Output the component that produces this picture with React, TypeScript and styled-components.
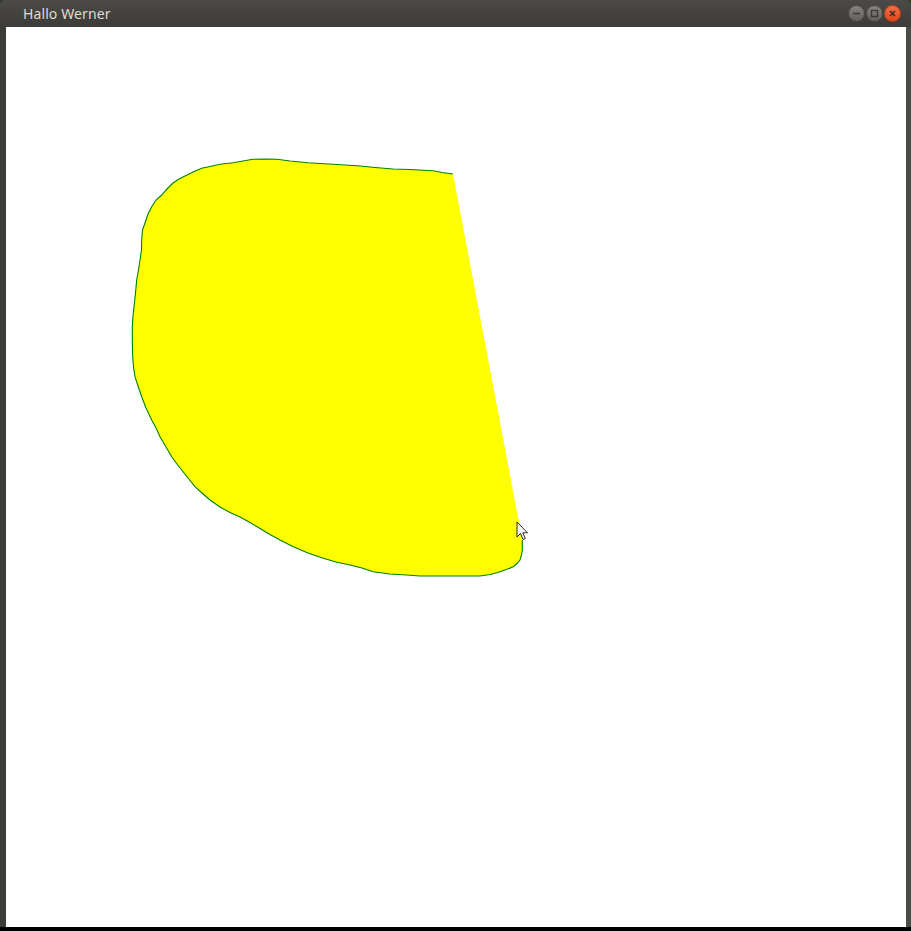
import * as React from "react";
import styled, { createGlobalStyle } from "styled-components";

const GlobalStyle = createGlobalStyle`
  html, body {
    margin: 0;
    padding: 0;
    background: #2f3b22;
  }
  body {
    font-family: "Noto Sans", "DejaVu Sans", sans-serif;
  }
`;

const Frame = styled.div`
  width: 911px;
  height: 931px;
  display: flex;
  flex-direction: column;
  overflow: hidden;
`;

const TitleBar = styled.div`
  height: 27px;
  flex: 0 0 27px;
  display: flex;
  align-items: center;
  justify-content: space-between;
  padding: 0 10px 0 23px;
  box-sizing: border-box;
  background: linear-gradient(#4b4a46, #3c3b37);
  border-radius: 5px 5px 0 0;
`;

const Title = styled.span`
  color: #dfdbd2;
  font-size: 14px;
  line-height: 27px;
  letter-spacing: 0.1px;
`;

const Controls = styled.div`
  display: flex;
  gap: 1px;
  align-items: center;
`;

const WinButton = styled.div<{ $close?: boolean }>`
  width: 17px;
  height: 17px;
  border-radius: 50%;
  box-sizing: border-box;
  display: flex;
  align-items: center;
  justify-content: center;
  border: 1px solid ${(p) => (p.$close ? "#b8401c" : "#4a4945")};
  background: ${(p) =>
    p.$close
      ? "linear-gradient(#f26d43, #e0491c)"
      : "linear-gradient(#85847f, #605f5b)"};
`;

const Body = styled.div`
  flex: 1;
  display: flex;
`;

const Border = styled.div<{ $w: number; $c: string }>`
  width: ${(p) => p.$w}px;
  flex: 0 0 ${(p) => p.$w}px;
  background: ${(p) => p.$c};
`;

const Canvas = styled.div`
  flex: 1;
  position: relative;
  background: #ffffff;
`;

const Drawing = styled.svg`
  display: block;
  width: 900px;
  height: 900px;
`;

const Cursor = styled.svg`
  position: absolute;
  left: 510px;
  top: 494px;
  width: 14px;
  height: 22px;
`;

const BottomStrip = styled.div`
  height: 4px;
  flex: 0 0 4px;
  background: #000000;
`;

const outline = [
  [453, 174], [442, 172.5], [433, 170.7], [410, 169.5], [393, 169], [375, 167.5],
  [360, 166], [345, 165], [333, 164.3], [320, 163.5], [308, 162.7], [290, 161],
  [277, 159.3], [265, 159], [253, 159.3], [243, 161], [233, 162.7], [220, 164.3],
  [210, 166.5], [201.7, 168.3], [193, 172], [185, 176], [179, 179], [173, 183],
  [167, 189], [161.7, 195], [156, 200], [151.7, 206.7], [148, 214], [145, 223],
  [142.5, 230], [141.7, 240], [141.5, 250], [140, 260], [138.5, 270], [136.7, 280],
  [135.5, 293], [134, 306.7], [133, 316], [132.3, 326.7], [132.3, 342], [132.7, 356.7],
  [133.5, 367], [135, 376.7], [138, 386], [141.7, 396.7], [146, 408], [151.7, 420],
  [156, 428], [160, 436.7], [166, 447], [171.7, 456.7], [177, 464], [181.7, 470],
  [188, 478], [195, 486.7], [202, 493], [210, 500], [220, 507], [230, 512.5],
  [240, 517], [250, 522.5], [260, 528.5], [270, 534.5], [280, 540], [293.3, 546.7],
  [308, 553], [323.3, 558.3], [336, 562], [350, 565], [362, 568], [373.3, 571.7],
  [390, 574], [406.7, 575], [420, 576], [440, 576], [460, 576], [480, 576],
  [490, 574.5], [496.7, 572.7], [505, 570], [513.3, 566.7], [517, 563.5], [520, 560],
  [521.5, 555], [522.3, 550], [522.3, 540],
];

const shapePath = "M" + outline.map(([x, y]) => `${x} ${y}`).join(" L");

const App: React.FC = (): React.ReactElement => {
  return (
    <>
      <GlobalStyle />
      <Frame>
        <TitleBar>
          <Title>Hallo Werner</Title>
          <Controls>
            <WinButton>
              <svg width="9" height="9" viewBox="0 0 9 9">
                <path d="M1 4.5 H8" stroke="#3a3935" strokeWidth="1.6" />
              </svg>
            </WinButton>
            <WinButton>
              <svg width="9" height="9" viewBox="0 0 9 9">
                <rect x="1.5" y="1.5" width="6" height="6" fill="none" stroke="#3a3935" strokeWidth="1.3" />
              </svg>
            </WinButton>
            <WinButton $close>
              <svg width="9" height="9" viewBox="0 0 9 9">
                <path d="M2 2 L7 7 M7 2 L2 7" stroke="#3a2a22" strokeWidth="1.5" />
              </svg>
            </WinButton>
          </Controls>
        </TitleBar>
        <Body>
          <Border $w={6} $c="#3c3b37" />
          <Canvas>
            <Drawing viewBox="6 27 900 900">
              <path d={shapePath} fill="#ffff00" stroke="#008000" strokeWidth="1.1" />
            </Drawing>
            <Cursor viewBox="0 0 14 22">
              <path
                d="M1 1 L1 16 L4.5 12.5 L7 18.5 L9.3 17.5 L6.8 11.8 L11.5 11.8 Z"
                fill="#f4f4f4"
                stroke="#2a2a2a"
                strokeWidth="1"
                strokeLinejoin="round"
              />
            </Cursor>
          </Canvas>
          <Border $w={5} $c="#4b4b48" />
        </Body>
        <BottomStrip />
      </Frame>
    </>
  );
};

export default App;
